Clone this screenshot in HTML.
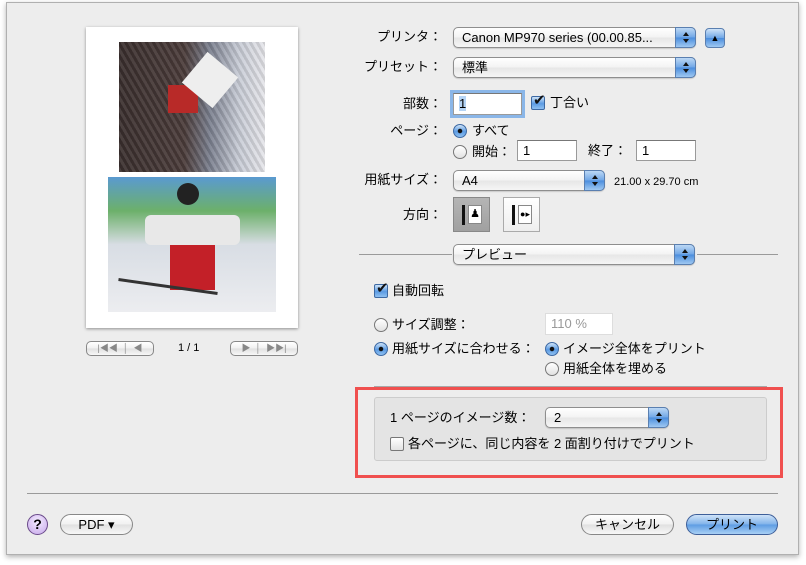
<!DOCTYPE html>
<html><head><meta charset="utf-8"><style>
*{box-sizing:border-box;margin:0;padding:0}
body{width:806px;height:565px;background:#fff;position:relative;overflow:hidden;font-family:"Liberation Sans","Noto Sans CJK JP",sans-serif;font-size:13px;color:#000;line-height:15px}
.a{position:absolute}
#win{left:6px;top:2px;width:793px;height:553px;background:#ededed;border:1px solid #b0b0b0;box-shadow:0 2px 5px rgba(0,0,0,.3)}
.lbl{position:absolute;text-align:right;width:120px;line-height:14px}
.pop{position:absolute;height:21px;border:1px solid #8e8e8e;border-radius:5px;background:linear-gradient(#fff,#f3f3f3 50%,#e6e6e6 51%,#f5f5f5);padding-left:8px;line-height:19px;font-size:13px;box-shadow:0 1px 1px rgba(0,0,0,.15)}
.pop .arr{position:absolute;right:-1px;top:-1px;width:21px;height:21px;border-radius:0 5px 5px 0;background:linear-gradient(#bcd8f5,#6fa6e6 50%,#4a8ddd 51%,#9ec8f2);border:1px solid #5a7fb0}
.pop .arr:before{content:"";position:absolute;left:7px;top:4px;border:3px solid transparent;border-bottom:4px solid #111;border-top:0}
.pop .arr:after{content:"";position:absolute;left:7px;top:11px;border:3px solid transparent;border-top:4px solid #111;border-bottom:0}
.fld{position:absolute;background:#fff;border:1px solid #9a9a9a;border-top-color:#777;padding-left:5px;line-height:19px;font-size:13px}
.rad{position:absolute;width:14px;height:14px;border-radius:50%;border:1px solid #777;background:linear-gradient(#fff,#e2e2e2)}
.rad.on{background:radial-gradient(circle,#111 0 2px,transparent 2.5px),linear-gradient(#cfe3f8,#5b9be3 55%,#8fc0f1);border-color:#3d69a3}
.chk{position:absolute;width:14px;height:14px;border:1px solid #777;border-radius:2px;background:linear-gradient(#fff,#e2e2e2)}
.chk.on{background:linear-gradient(#cfe3f8,#5b9be3 55%,#8fc0f1);border-color:#3d69a3}
.chk.on:after{content:"✔";position:absolute;left:1px;top:-4px;font-size:15px;color:#111}
.line{position:absolute;height:1px;background:#9a9a9a}
.btn{position:absolute;height:21px;border:1px solid #888;border-radius:11px;background:linear-gradient(#fff,#f0f0f0 50%,#e0e0e0 51%,#f8f8f8);text-align:center;line-height:19px;font-size:13px}
</style></head><body>
<div class="a" id="win"></div>

<!-- preview page -->
<div class="a" style="left:86px;top:27px;width:212px;height:301px;background:#fff;box-shadow:0 1px 3px rgba(0,0,0,.4)"></div>
<div class="a" style="left:119px;top:42px;width:146px;height:130px;background:linear-gradient(90deg,#3a2f2e 0%,#4b3c3a 45%,#7a7f8e 62%,#c8ccd6 82%,#e6e6ea 100%)"></div>
<div class="a" style="left:119px;top:42px;width:146px;height:130px;background:repeating-linear-gradient(60deg,rgba(255,255,255,.08) 0 3px,rgba(0,0,0,.1) 3px 6px)"></div>
<div class="a" style="left:168px;top:85px;width:30px;height:28px;background:#b82a28"></div>
<div class="a" style="left:190px;top:60px;width:40px;height:40px;background:#eee;transform:rotate(-50deg)"></div>
<div class="a" style="left:108px;top:177px;width:168px;height:135px;background:linear-gradient(180deg,#5a9ad0 0%,#6cb06a 25%,#d8dde4 50%,#ecedf0 100%)"></div>
<div class="a" style="left:145px;top:215px;width:95px;height:30px;background:#e8e8e8;border-radius:6px"></div>
<div class="a" style="left:170px;top:245px;width:45px;height:45px;background:#c32028"></div>
<div class="a" style="left:177px;top:183px;width:22px;height:22px;background:#222;border-radius:50%"></div>
<div class="a" style="left:118px;top:285px;width:100px;height:3px;background:#333;transform:rotate(8deg)"></div>

<div class="btn" style="left:86px;top:341px;width:68px;height:15px;border-radius:5px;line-height:13px;font-size:9px;color:#888">|◀◀ &nbsp;│&nbsp; ◀</div>
<div class="a" style="left:178px;top:341px;font-size:11px">1 / 1</div>
<div class="btn" style="left:230px;top:341px;width:68px;height:15px;border-radius:5px;line-height:13px;font-size:9px;color:#888">▶ &nbsp;│&nbsp; ▶▶|</div>

<!-- right side -->
<div class="lbl" style="left:322px;top:30px">プリンタ：</div>
<div class="pop" style="left:453px;top:27px;width:243px">Canon MP970 series (00.00.85...<span class="arr"></span></div>
<div class="btn" style="left:705px;top:28px;width:20px;height:20px;border-radius:4px;background:linear-gradient(#cfe3f8,#6fa6e6 50%,#4a8ddd 51%,#9ec8f2);border-color:#5a7fb0;font-size:9px;line-height:18px">▲</div>

<div class="lbl" style="left:322px;top:60px">プリセット：</div>
<div class="pop" style="left:453px;top:57px;width:243px">標準<span class="arr"></span></div>

<div class="lbl" style="left:322px;top:97px">部数：</div>
<div class="fld" style="left:453px;top:93px;width:69px;height:22px;box-shadow:0 0 0 3px #8ab6e8"><span style="background:#b5d4f5">1</span></div>
<div class="chk on" style="left:531px;top:96px"></div>
<div class="a" style="left:550px;top:95px">丁合い</div>

<div class="lbl" style="left:322px;top:124px">ページ：</div>
<div class="rad on" style="left:453px;top:124px"></div>
<div class="a" style="left:472px;top:123px">すべて</div>
<div class="rad" style="left:453px;top:145px"></div>
<div class="a" style="left:472px;top:144px">開始：</div>
<div class="fld" style="left:517px;top:140px;width:60px;height:21px">1</div>
<div class="a" style="left:588px;top:143px">終了：</div>
<div class="fld" style="left:636px;top:140px;width:60px;height:21px">1</div>

<div class="lbl" style="left:322px;top:173px">用紙サイズ：</div>
<div class="pop" style="left:453px;top:170px;width:152px">A4<span class="arr"></span></div>
<div class="a" style="left:614px;top:175px;font-size:11px">21.00 x 29.70 cm</div>

<div class="lbl" style="left:322px;top:208px">方向：</div>
<div class="a" style="left:453px;top:197px;width:37px;height:35px;background:linear-gradient(#b5b5b5,#a0a0a0);border:1px solid #888"></div>
<div class="a" style="left:462px;top:205px;width:3px;height:20px;background:#111"></div>
<div class="a" style="left:468px;top:205px;width:14px;height:19px;background:#fff;border:1px solid #888;font-size:11px;text-align:center;line-height:17px">♟</div>
<div class="a" style="left:503px;top:197px;width:37px;height:35px;background:linear-gradient(#fff,#eee);border:1px solid #aaa"></div>
<div class="a" style="left:512px;top:205px;width:3px;height:20px;background:#111"></div>
<div class="a" style="left:518px;top:205px;width:14px;height:19px;background:#fff;border:1px solid #888;font-size:9px;text-align:center;line-height:17px">●▸</div>

<div class="line" style="left:359px;top:254px;width:93px"></div>
<div class="line" style="left:697px;top:254px;width:81px"></div>
<div class="pop" style="left:453px;top:244px;width:242px">プレビュー<span class="arr"></span></div>

<div class="chk on" style="left:374px;top:284px"></div>
<div class="a" style="left:392px;top:283px">自動回転</div>

<div class="rad" style="left:374px;top:318px"></div>
<div class="a" style="left:392px;top:317px">サイズ調整：</div>
<div class="fld" style="left:545px;top:313px;width:68px;height:22px;border-color:#ddd;color:#999">110 %</div>

<div class="rad on" style="left:374px;top:342px"></div>
<div class="a" style="left:392px;top:341px">用紙サイズに合わせる：</div>
<div class="rad on" style="left:545px;top:342px"></div>
<div class="a" style="left:563px;top:341px">イメージ全体をプリント</div>
<div class="rad" style="left:545px;top:362px"></div>
<div class="a" style="left:563px;top:361px">用紙全体を埋める</div>

<div class="line" style="left:374px;top:386px;width:393px;background:#a8a8a8"></div>
<div class="a" style="left:355px;top:387px;width:428px;height:91px;border:3px solid #f0504f"></div>
<div class="a" style="left:374px;top:397px;width:393px;height:64px;background:#e4e4e4;border:1px solid #ccc;border-radius:3px"></div>
<div class="a" style="left:390px;top:410px">1 ページのイメージ数：</div>
<div class="pop" style="left:545px;top:407px;width:124px">2<span class="arr"></span></div>
<div class="chk" style="left:390px;top:437px"></div>
<div class="a" style="left:408px;top:436px">各ページに、同じ内容を 2 面割り付けでプリント</div>

<div class="line" style="left:27px;top:493px;width:751px"></div>
<div class="a" style="left:27px;top:514px;width:21px;height:21px;border-radius:50%;border:1px solid #6a4a8a;background:radial-gradient(circle at 50% 35%,#f4ecff,#c6a7ea);text-align:center;font-weight:bold;line-height:19px;font-size:14px">?</div>
<div class="btn" style="left:60px;top:514px;width:73px">PDF ▾</div>
<div class="btn" style="left:581px;top:514px;width:93px;border-radius:11px">キャンセル</div>
<div class="btn" style="left:686px;top:514px;width:92px;background:linear-gradient(#cfe3f8,#7fb2ea 50%,#5c9be3 51%,#a9d0f5);border-color:#3e5f99">プリント</div>
</body></html>
